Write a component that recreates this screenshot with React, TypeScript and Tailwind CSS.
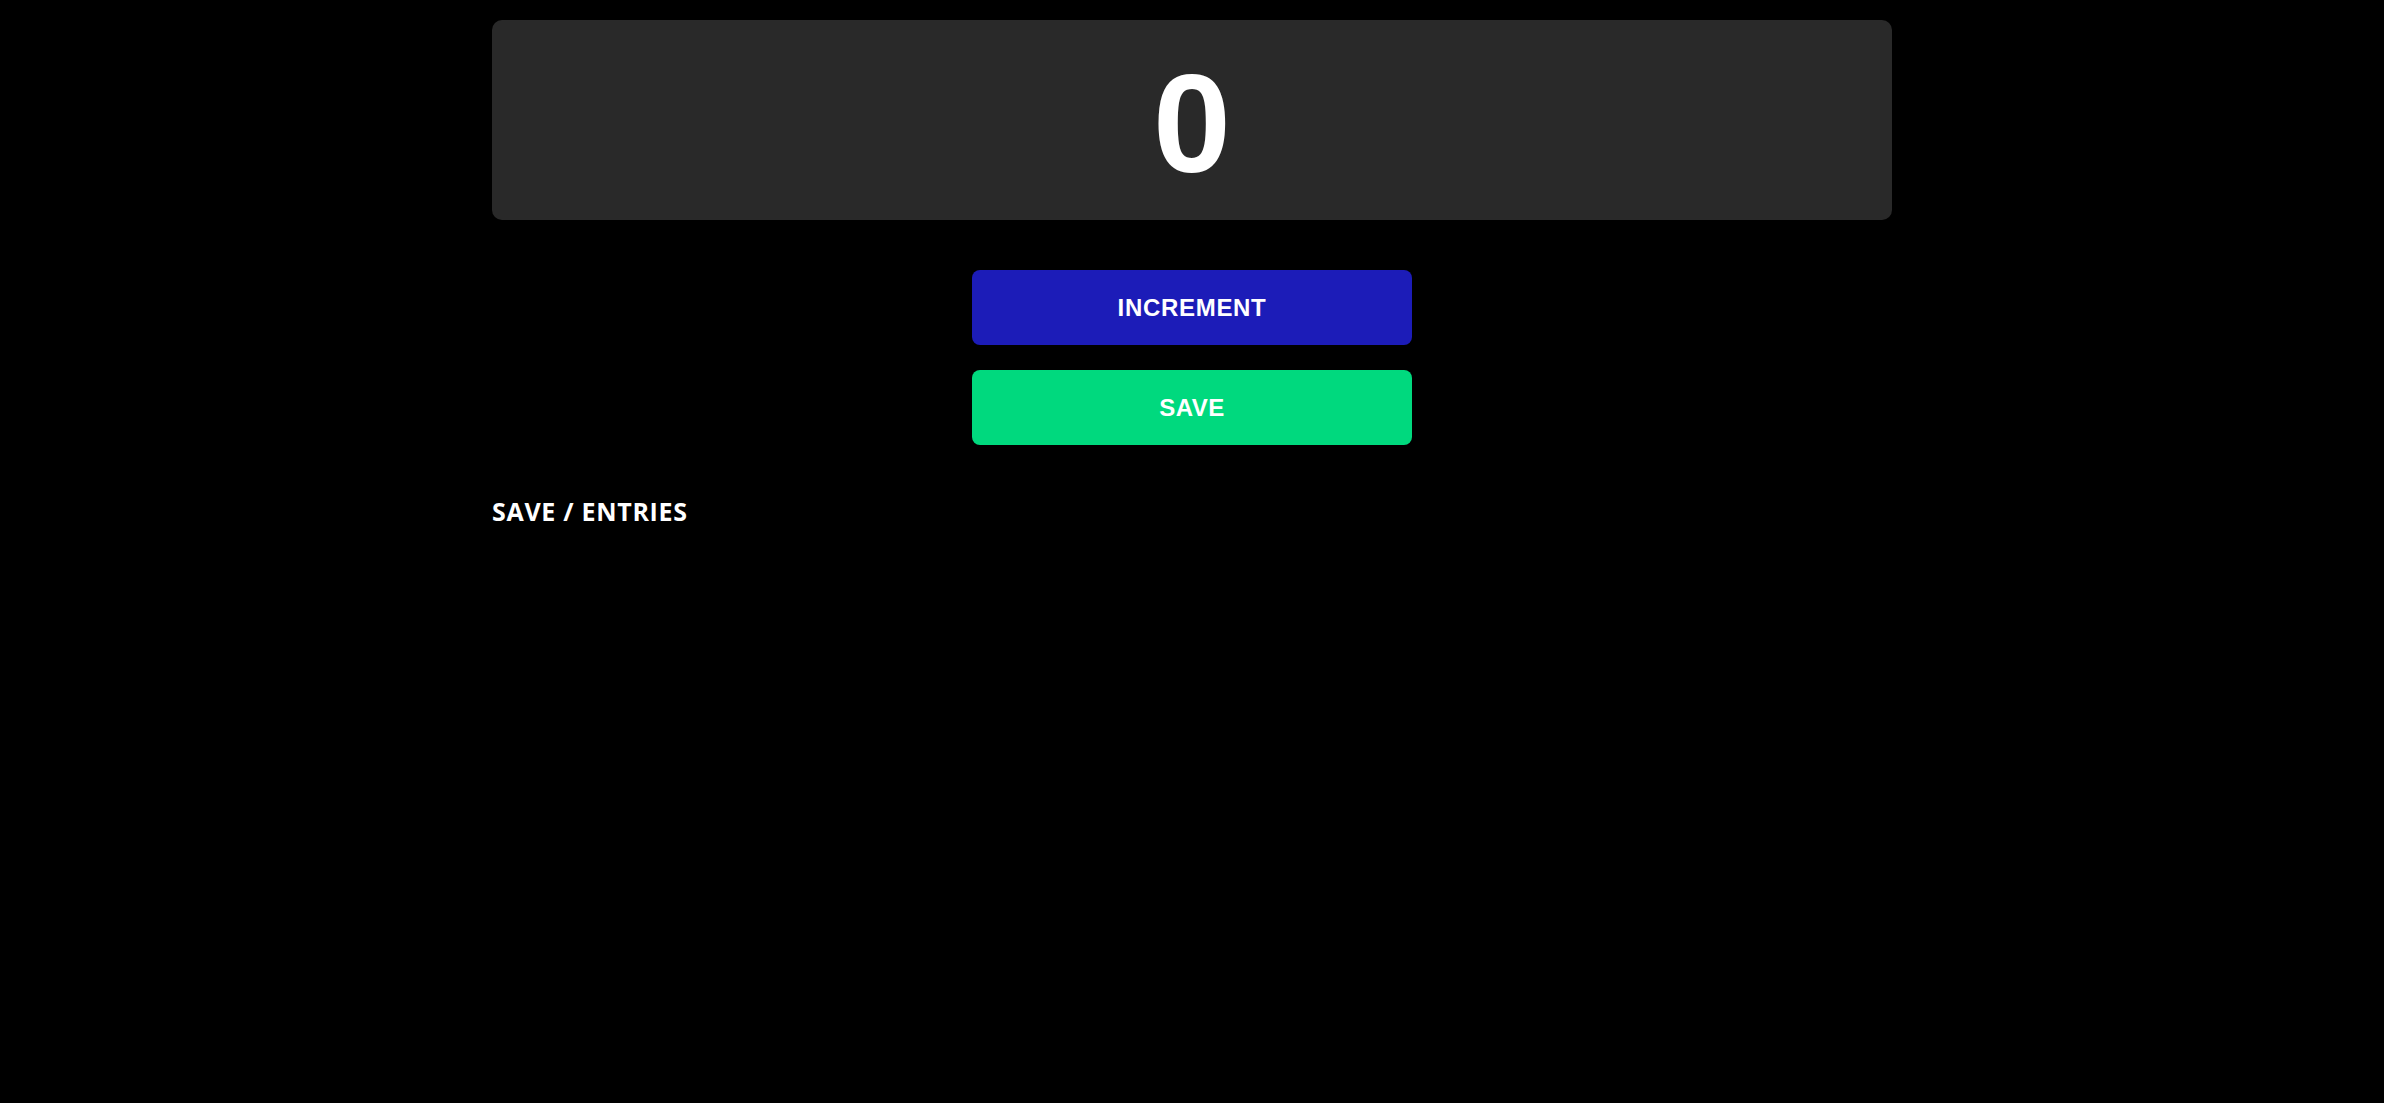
import { useState } from 'react';

export default function App() {
  const [count, setCount] = useState(0);
  const [entries, setEntries] = useState<number[]>([]);

  return (
    <div className="min-h-screen bg-black text-white">
      <div className="w-[1400px] mx-auto pt-5">
        <div className="h-[200px] pt-2 bg-[#292929] rounded-[10px] flex items-center justify-center">
          <span className="text-[140px] font-bold leading-none font-['Liberation_Sans',Arial,sans-serif]">
            {count}
          </span>
        </div>

        <div className="mt-[50px] flex flex-col items-center gap-[25px]">
          <button
            onClick={() => setCount(count + 1)}
            className="w-[440px] h-[75px] rounded-[8px] bg-[#1c1cb8] text-white text-[24px] font-bold tracking-[0.7px] font-['Liberation_Sans',Arial,sans-serif]"
          >
            INCREMENT
          </button>
          <button
            onClick={() => setEntries([...entries, count])}
            className="w-[440px] h-[75px] rounded-[8px] bg-[#00d97e] text-white text-[24px] font-bold tracking-[0.5px] font-['Liberation_Sans',Arial,sans-serif]"
          >
            SAVE
          </button>
        </div>

        <h2 className="mt-[48px] text-[25px] leading-[36px] tracking-[0.7px] font-bold font-['Open_Sans',sans-serif]">
          SAVE / ENTRIES
        </h2>
        <div className="mt-2 text-[20px] font-['Open_Sans',sans-serif]">
          {entries.join(' - ')}
        </div>
      </div>
    </div>
  );
}
